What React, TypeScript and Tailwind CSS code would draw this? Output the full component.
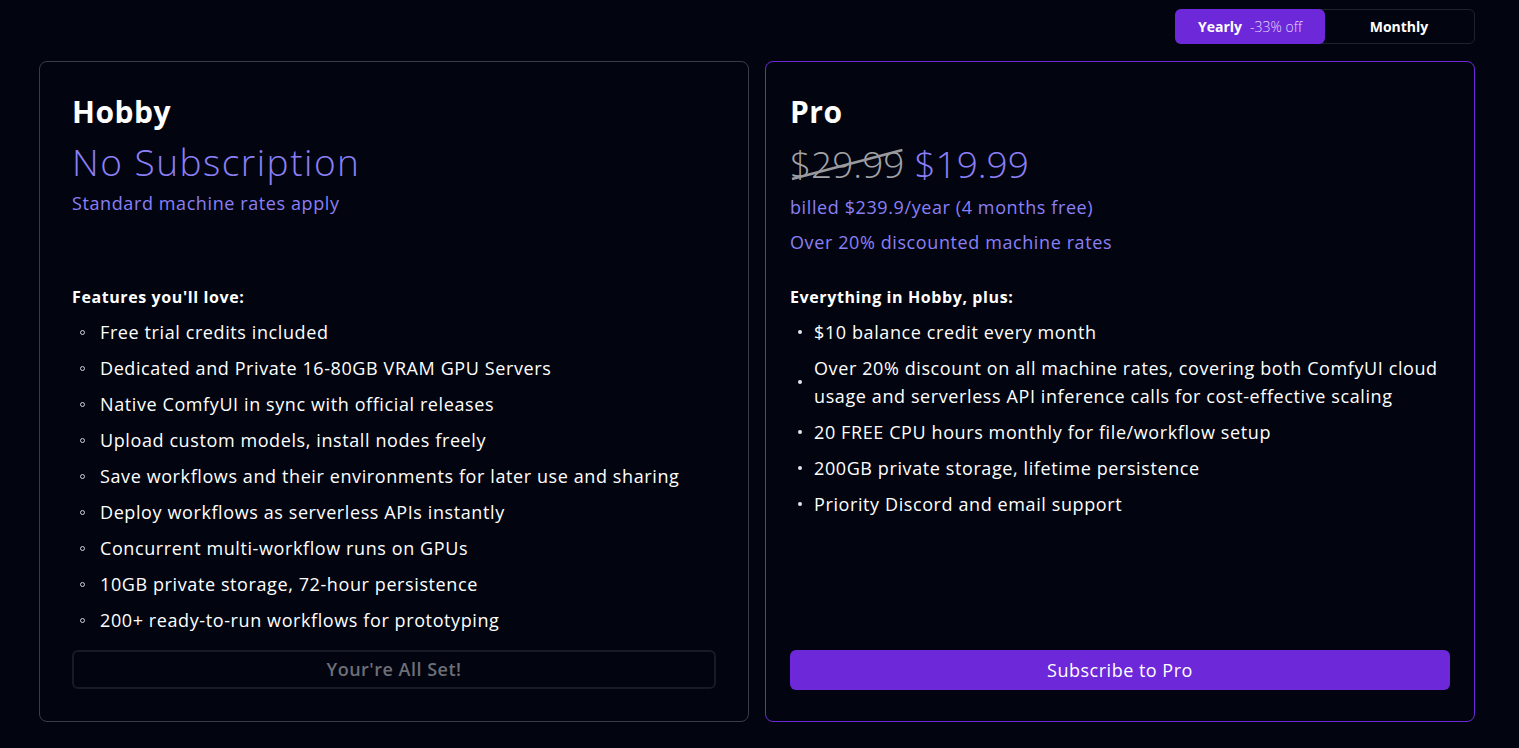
import React from "react";

const hobby = [
  "Free trial credits included",
  "Dedicated and Private 16-80GB VRAM GPU Servers",
  "Native ComfyUI in sync with official releases",
  "Upload custom models, install nodes freely",
  "Save workflows and their environments for later use and sharing",
  "Deploy workflows as serverless APIs instantly",
  "Concurrent multi-workflow runs on GPUs",
  "10GB private storage, 72-hour persistence",
  "200+ ready-to-run workflows for prototyping",
];

const pro = [
  "$10 balance credit every month",
  "Over 20% discount on all machine rates, covering both ComfyUI cloud usage and serverless API inference calls for cost-effective scaling",
  "20 FREE CPU hours monthly for file/workflow setup",
  "200GB private storage, lifetime persistence",
  "Priority Discord and email support",
];

export default function App() {
  return (
    <div
      className="min-h-screen w-full bg-[#02050f] text-white"
      style={{ fontFamily: '"Open Sans", "Noto Sans", sans-serif' }}
    >
      <div className="pl-[39px] pr-[44px] pt-[9px]">
        <div className="flex justify-end">
          <div className="flex h-[35px] w-[300px] rounded-md border border-[#1e222c]">
            <button className="-m-px flex h-[35px] w-[150px] items-center justify-center gap-2 rounded-md bg-[#6d28d9] text-[14px]">
              <span className="font-bold">Yearly</span>
              <span className="font-light text-[#e5dcff]">-33% off</span>
            </button>
            <button className="flex flex-1 items-center justify-center text-[14px] font-bold">
              Monthly
            </button>
          </div>
        </div>

        <div className="mt-[17px] grid grid-cols-2 gap-4">
          {/* Hobby */}
          <div className="flex h-[661px] flex-col rounded-lg border border-[#3c3c46] px-8 pt-8 pb-8">
            <div className="h-[191px]">
              <h2 className="text-[30px] font-bold leading-9 tracking-[0.5px]">Hobby</h2>
              <div className="mt-[10px] text-[37px] font-light leading-[44px] tracking-[1.5px] text-[#8b7ff7]">
                No Subscription
              </div>
              <div className="mt-[5px] text-[18px] leading-7 tracking-[0.6px] text-[#8b7ff7]">
                Standard machine rates apply
              </div>
            </div>
            <div className="text-[16px] font-bold leading-6 tracking-[0.6px]">Features you'll love:</div>
            <ul className="mt-[9px] flex flex-col gap-2">
              {hobby.map((t) => (
                <li key={t} className="flex items-center text-[18px] leading-7 tracking-[0.6px]">
                  <span className="ml-[8px] mr-[15px] h-[5px] w-[5px] shrink-0 rounded-full border border-[#cfcfd6]" />
                  <span>{t}</span>
                </li>
              ))}
            </ul>
            <button className="mt-auto h-[39px] w-full rounded-md border-2 border-[#171b24] text-[18px] font-semibold tracking-[0.5px] text-[#6e6e78]">
              Your're All Set!
            </button>
          </div>

          {/* Pro */}
          <div className="flex h-[661px] flex-col rounded-lg border border-[#6d28d9] px-6 pt-8 pb-[31px]">
            <div className="h-[191px]">
              <h2 className="text-[30px] font-bold leading-9 tracking-[0.5px]">Pro</h2>
              <div className="mt-[12px] flex items-baseline gap-[10px] text-[37px] font-light leading-[44px]">
                <span className="relative text-[#a3a3a8]">
                  $29.99
                  <svg
                    className="pointer-events-none absolute left-0 top-0 h-full w-full"
                    viewBox="0 0 114 44"
                    preserveAspectRatio="none"
                  >
                    <line x1="2" y1="37" x2="112" y2="8" stroke="#9a9a9e" strokeWidth="2.5" />
                  </svg>
                </span>
                <span className="text-[#8b7ff7]">$19.99</span>
              </div>
              <div className="mt-[7px] text-[18px] leading-7 tracking-[0.6px] text-[#8b7ff7]">
                billed $239.9/year (4 months free)
              </div>
              <div className="mt-[7px] text-[18px] leading-7 tracking-[0.6px] text-[#8b7ff7]">
                Over 20% discounted machine rates
              </div>
            </div>
            <div className="text-[16px] font-bold leading-6 tracking-[0.6px]">Everything in Hobby, plus:</div>
            <ul className="mt-[9px] flex flex-col gap-2">
              {pro.map((t) => (
                <li key={t} className="flex items-center text-[18px] leading-7 tracking-[0.6px]">
                  <span className="ml-[8px] mr-[12px] h-[4px] w-[4px] shrink-0 rounded-full bg-[#e5e5ea]" />
                  <span>{t}</span>
                </li>
              ))}
            </ul>
            <button className="mt-auto h-[40px] w-full rounded-md bg-[#6d28d9] text-[18px] font-medium tracking-[0.5px] text-white">
              Subscribe to Pro
            </button>
          </div>
        </div>
      </div>
    </div>
  );
}
